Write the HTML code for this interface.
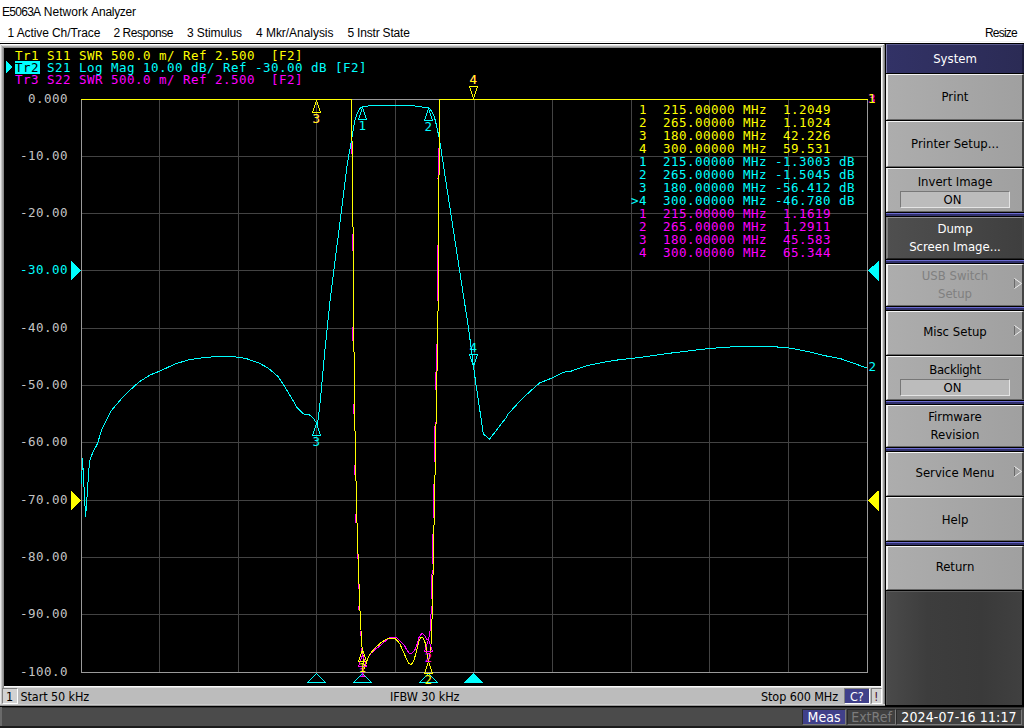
<!DOCTYPE html>
<html><head><meta charset="utf-8"><title>E5063A Network Analyzer</title><style>
html,body{margin:0;padding:0;}
body{width:1024px;height:728px;overflow:hidden;position:relative;background:#fff;font-family:"Liberation Sans",sans-serif;}
.a{position:absolute;}
.t{position:absolute;white-space:pre;line-height:1;}
.seg{font:12px "Liberation Sans",sans-serif;color:#000;}
.mono{font:12.5px "DejaVu Sans Mono","Liberation Mono",monospace;letter-spacing:0.475px;}
.ui{font:12.5px "DejaVu Sans Condensed","Liberation Sans",sans-serif;color:#000;letter-spacing:-0.1px;}
.ui14{font:14px "DejaVu Sans Condensed","Liberation Sans",sans-serif;}
#bdate{letter-spacing:0.12px;}
.ui13{font:13px "DejaVu Sans Condensed","Liberation Sans",sans-serif;}
.btn{position:absolute;left:886px;width:138px;box-sizing:border-box;background:linear-gradient(90deg,#adadad,#a0a0a0);border-top:1px solid #f4f4f4;border-left:2px solid #f0f0f0;border-bottom:1px solid #666;border-right:2px solid #333;border-right-color:#444;}
.kl{width:138px;text-align:center;font:13px/13px "DejaVu Sans Condensed","Liberation Sans",sans-serif;}
.btn.dark{background:linear-gradient(90deg,#4f4f4f,#3f3f3f);border-top-color:#909090;border-left-color:#808080;border-bottom-color:#222;}
.btn.dark .l{color:#fff;}
.btn.dis .l{color:#808080;}
.sep{position:absolute;left:886px;width:138px;height:3px;background:linear-gradient(180deg,#6b6bd0 0,#6b6bd0 1px,#30306a 1px,#30306a 3px);}
.on{position:absolute;width:110px;height:17px;box-sizing:border-box;background:#bcbcbc;border-top:1px solid #777;border-left:1px solid #777;border-bottom:1px solid #e4e4e4;border-right:1px solid #e4e4e4;}
</style></head><body>
<div class="a" style="left:0;top:41px;width:1024px;height:1px;background:#f0f0f0"></div>
<div class="a" style="left:0;top:43px;width:1024px;height:1px;background:#000"></div>
<div class="t seg" id="title" style="left:2px;top:5px;"><span style="letter-spacing:-0.72px">E5063A</span> <span style="letter-spacing:0.03px">Network</span> <span style="letter-spacing:-0.3px">Analyzer</span></div>
<div class="t seg" id="m0" style="left:7.5px;top:26px;letter-spacing:-0.09px">1 Active Ch/Trace</div>
<div class="t seg" id="m1" style="left:113.5px;top:26px;letter-spacing:-0.45px">2 Response</div>
<div class="t seg" id="m2" style="left:187px;top:26px;letter-spacing:-0.1px">3 Stimulus</div>
<div class="t seg" id="m3" style="left:256px;top:26px;letter-spacing:-0.04px">4 Mkr/Analysis</div>
<div class="t seg" id="m4" style="left:347.5px;top:26px;letter-spacing:-0.2px">5 Instr State</div>
<div class="t seg" id="m5" style="left:985px;top:26px;letter-spacing:-0.8px">Resize</div>
<div class="a" style="left:0;top:44px;width:885px;height:662px;background:#a0a0a0"></div>
<div class="a" style="left:0;top:44px;width:885px;height:1px;background:#ffffff"></div>
<div class="a" style="left:0;top:45px;width:885px;height:1px;background:#dcdcdc"></div>
<div class="a" style="left:0;top:46px;width:885px;height:1px;background:#b0b0b0"></div>
<div class="a" style="left:0;top:47px;width:885px;height:1px;background:#909090"></div>
<div class="a" style="left:0px;top:44px;width:1px;height:661px;background:#e8e8e8"></div>
<div class="a" style="left:1px;top:45px;width:1px;height:660px;background:#c6c6c6"></div>
<div class="a" style="left:2px;top:46px;width:1px;height:659px;background:#a2a2a2"></div>
<div class="a" style="left:3px;top:47px;width:1px;height:658px;background:#8a8a8a"></div>
<div class="a" style="left:881px;top:47px;width:1px;height:659px;background:#ffffff"></div>
<div class="a" style="left:882px;top:46px;width:1px;height:660px;background:#d8d8d8"></div>
<div class="a" style="left:883px;top:45px;width:1px;height:661px;background:#a0a0a0"></div>
<div class="a" style="left:884px;top:44px;width:1px;height:662px;background:#808080"></div>
<div class="a" style="left:4px;top:48px;width:877px;height:638px;background:#000"></div>
<div class="a" style="left:4px;top:686px;width:877px;height:19px;background:#bcbcbc;border-top:1px solid #f8f8f8;box-sizing:border-box"></div>
<div class="a" style="left:0px;top:704px;width:885px;height:1px;background:#cccccc"></div>
<div class="a" style="left:0px;top:705px;width:885px;height:1px;background:#9a9a9a"></div>
<div class="a" style="left:4px;top:687px;width:877px;height:1px;background:#dcdcdc"></div>
<div class="a" style="left:2px;top:688px;width:16px;height:16px;box-sizing:border-box;background:#d2d2d2;border-top:1px solid #808080;border-left:1px solid #808080;border-bottom:1px solid #fff;border-right:1px solid #fff"></div>
<div class="t ui" id="s1" style="left:6px;top:689px;">1</div>
<div class="t ui" id="sstart" style="left:20.5px;top:689px;">Start 50 kHz</div>
<div class="t ui" id="sifbw" style="left:390px;top:689px;">IFBW 30 kHz</div>
<div class="t ui" id="sstop" style="left:761px;top:689px;">Stop 600 MHz</div>
<div class="a" style="left:844px;top:688px;width:26px;height:16px;box-sizing:border-box;background:#40408a;border-top:1px solid #808080;border-left:1px solid #808080;border-bottom:1px solid #fff;border-right:1px solid #fff"></div>
<div class="t ui" id="sc" style="left:850px;top:689px;color:#fff">C?</div>
<div class="a" style="left:871px;top:688px;width:11px;height:16px;box-sizing:border-box;background:#d2d2d2;border-top:1px solid #808080;border-left:1px solid #808080;border-bottom:1px solid #fff;border-right:1px solid #fff"></div>
<div class="t ui" id="sex" style="left:874px;top:689px;color:#48102c">!</div>
<div class="a" style="left:0;top:706px;width:1024px;height:22px;background:#4b4b4b"></div>
<div class="a" style="left:0;top:706px;width:1024px;height:1px;background:#000"></div>
<div class="a" style="left:0;top:707px;width:1024px;height:1px;background:#303030"></div>
<div class="a" style="left:0;top:726px;width:1024px;height:2px;background:#1c1c1c"></div>
<div class="a" style="left:0;top:707px;width:2px;height:19px;background:#6a6a6a"></div>
<div class="a" style="left:802px;top:709px;width:44px;height:16px;box-sizing:border-box;background:#40408a;border-top:1px solid #2a2a2a;border-left:1px solid #2a2a2a;border-bottom:1px solid #7a7a7a;border-right:1px solid #7a7a7a"></div>
<div class="t ui14" id="bmeas" style="left:802px;width:44px;text-align:center;top:709px;color:#fff">Meas</div>
<div class="a" style="left:847px;top:709px;width:49px;height:16px;box-sizing:border-box;background:#404040;border-top:1px solid #2a2a2a;border-left:1px solid #2a2a2a;border-bottom:1px solid #7a7a7a;border-right:1px solid #7a7a7a"></div>
<div class="t ui14" id="bext" style="left:847px;width:49px;text-align:center;top:709px;color:#7c7c7c">ExtRef</div>
<div class="a" style="left:896px;top:709px;width:126px;height:16px;box-sizing:border-box;background:#404040;border-top:1px solid #2a2a2a;border-left:1px solid #2a2a2a;border-bottom:1px solid #7a7a7a;border-right:1px solid #7a7a7a"></div>
<div class="t ui14" id="bdate" style="left:896px;width:126px;text-align:center;top:709px;color:#fff">2024-07-16 11:17</div>
<div class="a" style="left:885px;top:44px;width:139px;height:662px;background:#000"></div>
<div class="a" style="left:886px;top:44px;width:138px;height:29px;background:linear-gradient(90deg,#323266,#2b2b55);border-left:1px solid #7c7caa;border-top:1px solid #5a5a8c;border-right:2px solid #1c1c3c;box-sizing:border-box"></div>
<div class="t ui13" id="ksys" style="left:886px;width:138px;text-align:center;top:51px;color:#fff">System</div>
<div class="btn " style="top:74px;height:46px"></div>
<div class="t kl" id="k0a" style="left:886px;top:90px;color:#000">Print</div>
<div class="btn " style="top:121px;height:46px"></div>
<div class="t kl" id="k1a" style="left:886px;top:137px;color:#000">Printer Setup...</div>
<div class="btn " style="top:168px;height:44px"></div>
<div class="on" style="left:900px;top:191px"></div>
<div class="t kl" id="k2a" style="left:886px;top:175px;color:#000">Invert Image</div>
<div class="t kl" id="k2b" style="left:883.5px;top:193px;color:#000">ON</div>
<div class="btn dark" style="top:217px;height:42px"></div>
<div class="t kl" id="k3a" style="left:886px;top:222px;color:#fff">Dump</div>
<div class="t kl" id="k3b" style="left:886px;top:240px;color:#fff">Screen Image...</div>
<div class="btn dis" style="top:264px;height:42px"></div>
<div class="t kl" id="k4a" style="left:886px;top:269px;color:#808080">USB Switch</div>
<div class="t kl" id="k4b" style="left:886px;top:287px;color:#808080">Setup</div>
<svg class="a" style="left:1012px;top:278px" width="12" height="12" viewBox="0 0 12 12"><path d="M2.5,1 L2.5,10" stroke="#6a6a6a" fill="none"/><path d="M2.5,0.5 L9.5,5.5 L2.5,10.5" stroke="#f0f0f0" fill="none"/></svg>
<div class="btn " style="top:311px;height:44px"></div>
<div class="t kl" id="k5a" style="left:886px;top:325px;color:#000">Misc Setup</div>
<svg class="a" style="left:1012px;top:325px" width="12" height="12" viewBox="0 0 12 12"><path d="M2.5,1 L2.5,10" stroke="#6a6a6a" fill="none"/><path d="M2.5,0.5 L9.5,5.5 L2.5,10.5" stroke="#f0f0f0" fill="none"/></svg>
<div class="btn " style="top:356px;height:44px"></div>
<div class="on" style="left:900px;top:379px"></div>
<div class="t kl" id="k6a" style="left:886px;top:363px;color:#000;letter-spacing:-0.33px">Backlight</div>
<div class="t kl" id="k6b" style="left:883.5px;top:381px;color:#000">ON</div>
<div class="btn " style="top:405px;height:42px"></div>
<div class="t kl" id="k7a" style="left:886px;top:410px;color:#000">Firmware</div>
<div class="t kl" id="k7b" style="left:886px;top:428px;color:#000">Revision</div>
<div class="btn " style="top:452px;height:44px"></div>
<div class="t kl" id="k8a" style="left:886px;top:466px;color:#000">Service Menu</div>
<svg class="a" style="left:1012px;top:466px" width="12" height="12" viewBox="0 0 12 12"><path d="M2.5,1 L2.5,10" stroke="#6a6a6a" fill="none"/><path d="M2.5,0.5 L9.5,5.5 L2.5,10.5" stroke="#f0f0f0" fill="none"/></svg>
<div class="btn " style="top:497px;height:44px"></div>
<div class="t kl" id="k9a" style="left:886px;top:513px;color:#000">Help</div>
<div class="btn " style="top:546px;height:44px"></div>
<div class="t kl" id="k10a" style="left:886px;top:560px;color:#000">Return</div>
<div class="sep" style="top:213px"></div>
<div class="sep" style="top:260px"></div>
<div class="sep" style="top:307px"></div>
<div class="sep" style="top:401px"></div>
<div class="sep" style="top:448px"></div>
<div class="sep" style="top:542px"></div>
<div class="a" style="left:886px;top:591px;width:136px;height:114px;background:linear-gradient(90deg,#4a4a4a,#3d3d3d 30%,#3a3a3a 70%,#404040);border-top:1px solid #5c5c5c;border-left:1px solid #5a5a5a;box-sizing:border-box"></div>
<svg class="a" style="left:0;top:0" width="1024" height="728" viewBox="0 0 1024 728" shape-rendering="crispEdges">
<rect x="159" y="99" width="1" height="574" fill="#434343"/>
<rect x="238" y="99" width="1" height="574" fill="#434343"/>
<rect x="316" y="99" width="1" height="574" fill="#434343"/>
<rect x="395" y="99" width="1" height="574" fill="#434343"/>
<rect x="474" y="99" width="1" height="574" fill="#434343"/>
<rect x="552" y="99" width="1" height="574" fill="#434343"/>
<rect x="631" y="99" width="1" height="574" fill="#434343"/>
<rect x="709" y="99" width="1" height="574" fill="#434343"/>
<rect x="788" y="99" width="1" height="574" fill="#434343"/>
<rect x="81" y="156" width="787" height="1" fill="#434343"/>
<rect x="81" y="213" width="787" height="1" fill="#434343"/>
<rect x="81" y="270" width="787" height="1" fill="#434343"/>
<rect x="81" y="328" width="787" height="1" fill="#434343"/>
<rect x="81" y="385" width="787" height="1" fill="#434343"/>
<rect x="81" y="442" width="787" height="1" fill="#434343"/>
<rect x="81" y="500" width="787" height="1" fill="#434343"/>
<rect x="81" y="557" width="787" height="1" fill="#434343"/>
<rect x="81" y="614" width="787" height="1" fill="#434343"/>
<rect x="81" y="99" width="787" height="1" fill="#9a9a9a"/><rect x="81" y="672" width="787" height="1" fill="#9a9a9a"/><rect x="81" y="99" width="1" height="574" fill="#9a9a9a"/><rect x="867" y="99" width="1" height="574" fill="#9a9a9a"/>
<polyline points="361.4,648.0 362.6,654.0 363.6,662.0 364.5,667.5 366.3,662.0 368.1,657.6 371.1,653.2 375.0,649.5 379.5,646.2 383.9,642.3 387.8,639.2 390.0,637.5 396.6,637.5 400.6,641.4 404.1,644.9 406.7,649.7 409.4,653.4 411.6,653.4 414.6,650.6 416.8,645.3 418.6,638.3 420.3,635.2 422.5,633.2 424.3,635.2 426.9,639.2 428.4,640.0 429.6,634.8 430.5,626.0 431.2,610.0" fill="none" stroke="#ff00ff" stroke-width="1"/>
<polyline points="351.2,143.0 351.3,154.0" fill="none" stroke="#ff00ff" stroke-width="1"/>
<polyline points="352.0,234.0 352.1,251.0" fill="none" stroke="#ff00ff" stroke-width="1"/>
<polyline points="352.8,327.0 352.9,341.0" fill="none" stroke="#ff00ff" stroke-width="1"/>
<polyline points="353.5,404.0 353.7,414.0" fill="none" stroke="#ff00ff" stroke-width="1"/>
<polyline points="354.7,465.0 354.9,475.0" fill="none" stroke="#ff00ff" stroke-width="1"/>
<polyline points="355.7,514.0 356.0,523.0" fill="none" stroke="#ff00ff" stroke-width="1"/>
<polyline points="357.0,553.0 357.2,559.0" fill="none" stroke="#ff00ff" stroke-width="1"/>
<polyline points="358.0,583.0 358.2,589.0" fill="none" stroke="#ff00ff" stroke-width="1"/>
<polyline points="358.8,606.0 359.0,610.0" fill="none" stroke="#ff00ff" stroke-width="1"/>
<polyline points="360.1,631.0 360.4,636.0" fill="none" stroke="#ff00ff" stroke-width="1"/>
<polyline points="438.3,148.0 438.0,179.0" fill="none" stroke="#ff00ff" stroke-width="1"/>
<polyline points="437.6,245.0 437.2,301.0" fill="none" stroke="#ff00ff" stroke-width="1"/>
<polyline points="436.5,344.0 435.7,390.0" fill="none" stroke="#ff00ff" stroke-width="1"/>
<polyline points="435.1,422.0 434.3,462.0" fill="none" stroke="#ff00ff" stroke-width="1"/>
<polyline points="433.8,484.0 433.2,518.0" fill="none" stroke="#ff00ff" stroke-width="1"/>
<polyline points="432.8,534.0 432.2,564.0" fill="none" stroke="#ff00ff" stroke-width="1"/>
<polyline points="432.1,570.0 431.5,599.0" fill="none" stroke="#ff00ff" stroke-width="1"/>
<polyline points="431.4,606.0 431.2,612.0" fill="none" stroke="#ff00ff" stroke-width="1"/>
<polyline points="81.5,484.0 82.5,458.0 85.6,517.0 89.5,461.0 93.0,452.0 97.3,444.0 102.0,429.0 111.0,411.0 122.0,398.0 128.0,392.0 139.0,382.0 150.0,375.0 160.0,371.0 175.0,364.0 188.0,360.0 201.0,358.0 211.0,357.0 223.0,356.0 236.0,357.0 246.0,358.5 259.0,363.0 268.0,368.0 278.0,376.5 284.0,385.5 291.0,397.0 297.0,407.5 303.5,414.0 309.0,414.5 313.5,418.5 316.5,423.0 317.3,424.5 318.7,415.5 321.4,389.0 323.2,369.0 325.0,349.5 327.0,330.0 330.0,301.0 347.3,164.0 351.0,143.3 352.7,132.4 354.4,122.5 356.6,114.8 359.9,108.7 361.5,107.3 362.5,106.5 367.5,106.5 368.5,105.5 414.5,105.5 415.5,106.5 421.5,106.5 422.5,107.5 427.5,107.5 429.0,108.5 430.5,109.6 432.4,112.5 434.3,116.7 435.5,121.4 436.6,126.0 437.6,130.7 438.5,134.7 439.6,140.0 450.8,213.6 462.6,290.0 468.6,328.5 473.4,365.8 476.3,386.7 479.6,408.7 483.3,434.0 489.5,439.0 497.0,429.6 507.0,416.4 508.0,414.2 517.0,404.3 528.0,393.3 539.5,383.0 552.0,378.0 563.0,372.3 571.0,371.2 578.6,368.4 588.4,365.3 598.0,363.4 614.0,360.4 631.0,358.5 647.0,356.5 666.5,353.6 686.0,351.3 705.5,348.9 722.0,347.5 736.0,346.6 771.0,346.6 787.0,347.6 799.0,349.8 812.0,352.5 826.5,356.0 841.0,358.8 855.4,363.9 867.0,368.0" fill="none" stroke="#00ffff" stroke-width="1"/>
<polyline points="81.0,99.5 351.5,99.5 351.9,138.0 352.4,150.0 354.4,400.0 356.6,511.0 359.7,605.0 361.0,630.0 361.3,644.0 362.5,649.5 363.5,660.0 364.6,668.5 366.0,664.0 367.2,660.3 368.5,656.8 370.7,653.2 375.1,648.0 380.4,643.1 384.8,640.1 388.3,638.4 394.9,638.4 397.1,640.5 399.7,643.6 403.2,651.5 406.7,659.4 408.9,663.8 411.6,664.2 413.8,660.3 415.5,655.0 417.3,648.0 419.0,640.9 420.8,637.9 422.5,637.4 424.3,640.1 425.6,644.5 426.9,652.4 428.4,661.5 429.4,657.0 430.4,650.0 431.5,640.0 431.8,626.0 432.3,610.0 434.3,511.0 436.7,390.0 438.2,300.0 439.5,99.5 867.5,99.5" fill="none" stroke="#ffff00" stroke-width="1"/>
<polygon points="71,261 81,270.5 71,280.5" fill="#00ffff"/><polygon points="878.5,261 868,270.5 878.5,280.5" fill="#00ffff"/>
<polygon points="71,490.5 81,500.5 71,510.5" fill="#ffff00"/><polygon points="878.5,490.5 868,500.5 878.5,510.5" fill="#ffff00"/>
<polygon points="6,60.5 12.5,67 6,73.5" fill="#00ffff"/>
<polygon points="316.5,673.5 325.5,682.5 307.5,682.5" fill="none" stroke="#00ffff" stroke-width="1"/>
<polygon points="362.5,673.5 371.5,682.5 353.5,682.5" fill="none" stroke="#00ffff" stroke-width="1"/>
<polygon points="428.5,673.5 437.5,682.5 419.5,682.5" fill="none" stroke="#00ffff" stroke-width="1"/>
<polygon points="473.5,673.5 482.5,682.5 464.5,682.5" fill="#00ffff" stroke="#00ffff" stroke-width="1"/>
<polygon points="316.5,100.5 320.5,112.5 312.5,112.5" fill="none" stroke="#ff00ff" stroke-width="1"/>
<polygon points="473.5,98.5 477.5,86.5 469.5,86.5" fill="none" stroke="#ff00ff" stroke-width="1"/>
<polygon points="362.5,654.5 366.5,666.5 358.5,666.5" fill="none" stroke="#ff00ff" stroke-width="1"/>
<polygon points="428.5,639.5 432.5,651.5 424.5,651.5" fill="none" stroke="#ff00ff" stroke-width="1"/>
<polygon points="316.5,423.5 320.5,435.5 312.5,435.5" fill="none" stroke="#00ffff" stroke-width="1"/>
<polygon points="362.5,107.5 366.5,119.5 358.5,119.5" fill="none" stroke="#00ffff" stroke-width="1"/>
<polygon points="428.5,108.5 432.5,120.5 424.5,120.5" fill="none" stroke="#00ffff" stroke-width="1"/>
<polygon points="473.5,366.5 477.5,354.5 469.5,354.5" fill="none" stroke="#00ffff" stroke-width="1"/>
<polygon points="316.5,100.5 320.5,112.5 312.5,112.5" fill="none" stroke="#ffff00" stroke-width="1"/>
<polygon points="473.5,98.5 477.5,86.5 469.5,86.5" fill="none" stroke="#ffff00" stroke-width="1"/>
<polygon points="362.5,649.5 366.5,661.5 358.5,661.5" fill="none" stroke="#ffff00" stroke-width="1"/>
<polygon points="428.5,661.5 432.5,673.5 424.5,673.5" fill="none" stroke="#ffff00" stroke-width="1"/>
</svg>
<div class="t mono" id="h1" style="left:15px;top:48px;color:#ffff00;">Tr1 S11 SWR 500.0 m/ Ref 2.500  [F2]</div>
<div class="a" style="left:15px;top:61px;width:25px;height:13px;background:#00ffff"></div>
<div class="t mono" id="h2" style="left:15px;top:60px;color:#00ffff;"><span style="color:#000">Tr2</span> S21 Log Mag 10.00 dB/ Ref -30.00 dB [F2]</div>
<div class="t mono" id="h3" style="left:15px;top:72px;color:#ff00ff;">Tr3 S22 SWR 500.0 m/ Ref 2.500  [F2]</div>
<div class="t mono" id="y0" style="left:28px;top:91px;color:#c4c4c4;">0.000</div>
<div class="t mono" id="y1" style="left:20px;top:148px;color:#c4c4c4;">-10.00</div>
<div class="t mono" id="y2" style="left:20px;top:205px;color:#c4c4c4;">-20.00</div>
<div class="t mono" id="y3" style="left:20px;top:262px;color:#00ffff;">-30.00</div>
<div class="t mono" id="y4" style="left:20px;top:320px;color:#c4c4c4;">-40.00</div>
<div class="t mono" id="y5" style="left:20px;top:377px;color:#c4c4c4;">-50.00</div>
<div class="t mono" id="y6" style="left:20px;top:434px;color:#c4c4c4;">-60.00</div>
<div class="t mono" id="y7" style="left:20px;top:492px;color:#c4c4c4;">-70.00</div>
<div class="t mono" id="y8" style="left:20px;top:549px;color:#c4c4c4;">-80.00</div>
<div class="t mono" id="y9" style="left:20px;top:606px;color:#c4c4c4;">-90.00</div>
<div class="t mono" id="y10" style="left:20px;top:664px;color:#c4c4c4;">-100.0</div>
<div class="t mono" id="r0" style="left:631px;top:102px;color:#ffff00;"> 1  215.00000 MHz  1.2049</div>
<div class="t mono" id="r1" style="left:631px;top:115px;color:#ffff00;"> 2  265.00000 MHz  1.1024</div>
<div class="t mono" id="r2" style="left:631px;top:128px;color:#ffff00;"> 3  180.00000 MHz  42.226</div>
<div class="t mono" id="r3" style="left:631px;top:141px;color:#ffff00;"> 4  300.00000 MHz  59.531</div>
<div class="t mono" id="r4" style="left:631px;top:154px;color:#00ffff;"> 1  215.00000 MHz -1.3003 dB</div>
<div class="t mono" id="r5" style="left:631px;top:167px;color:#00ffff;"> 2  265.00000 MHz -1.5045 dB</div>
<div class="t mono" id="r6" style="left:631px;top:180px;color:#00ffff;"> 3  180.00000 MHz -56.412 dB</div>
<div class="t mono" id="r7" style="left:631px;top:193px;color:#00ffff;">&gt;4  300.00000 MHz -46.780 dB</div>
<div class="t mono" id="r8" style="left:631px;top:206px;color:#ff00ff;"> 1  215.00000 MHz  1.1619</div>
<div class="t mono" id="r9" style="left:631px;top:219px;color:#ff00ff;"> 2  265.00000 MHz  1.2911</div>
<div class="t mono" id="r10" style="left:631px;top:232px;color:#ff00ff;"> 3  180.00000 MHz  45.583</div>
<div class="t mono" id="r11" style="left:631px;top:245px;color:#ff00ff;"> 4  300.00000 MHz  65.344</div>
<div class="t mono" style="left:312.5px;top:111px;color:#ff00ff">3</div>
<div class="t mono" style="left:469.5px;top:72px;color:#ff00ff">4</div>
<div class="t mono" style="left:358.5px;top:665px;color:#ff00ff">1</div>
<div class="t mono" style="left:424.5px;top:650px;color:#ff00ff">2</div>
<div class="t mono" style="left:312.5px;top:434px;color:#00ffff">3</div>
<div class="t mono" style="left:358.5px;top:118px;color:#00ffff">1</div>
<div class="t mono" style="left:424.5px;top:119px;color:#00ffff">2</div>
<div class="t mono" style="left:469.5px;top:340px;color:#00ffff">4</div>
<div class="t mono" style="left:312.5px;top:111px;color:#ffff00">3</div>
<div class="t mono" style="left:469.5px;top:72px;color:#ffff00">4</div>
<div class="t mono" style="left:358.5px;top:660px;color:#ffff00">1</div>
<div class="t mono" style="left:424.5px;top:672px;color:#ffff00">2</div>
<div class="t mono" style="left:868px;top:91px;color:#ff00ff">3</div>
<div class="t mono" style="left:868px;top:91px;color:#ffff00">1</div>
<div class="t mono" style="left:868.5px;top:359px;color:#00ffff">2</div>
</body></html>
